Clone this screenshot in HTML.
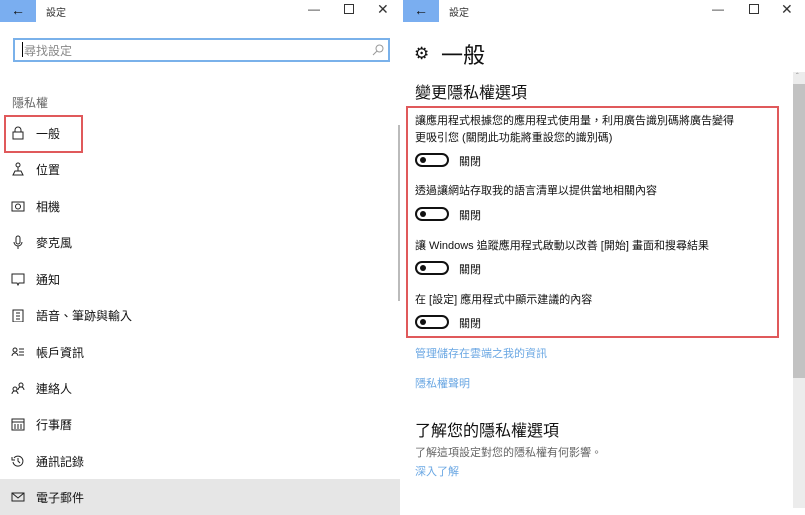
<!DOCTYPE html><html><head><meta charset="utf-8"><style>
*{margin:0;padding:0;box-sizing:border-box}
body{width:805px;height:508px;overflow:hidden;background:#fff;position:relative;font-family:"Liberation Sans","Noto Sans CJK TC",sans-serif;color:#111}
.a{position:absolute;white-space:nowrap}
.back{position:absolute;top:0;width:36px;height:22px;background:#7aaef0;color:#111;font-size:14px;text-align:center;line-height:20px}
.tb{font-size:10px;color:#333}
.item{position:absolute;left:0;width:400px;height:36px;font-size:12px}
.item span.t{position:absolute;left:36px;top:10px}
.item svg{position:absolute;left:11px;top:11px}
.tog{position:absolute;width:34px;height:14px;border:2px solid #111;border-radius:8px}
.tog:after{content:"";position:absolute;left:3px;top:2px;width:6px;height:6px;border-radius:50%;background:#111}
.lab{font-size:11px}
.lnk{color:#6aa7e3;font-size:11px}
</style></head><body>
<!-- left window -->
<div class="back" style="left:0">&#8592;</div>
<div class="a tb" style="left:46px;top:4px">設定</div>
<div class="a" style="left:308px;top:2px;font-size:12px;color:#333">&#8212;</div>
<div class="a" style="left:344px;top:4px;width:10px;height:10px;border:1px solid #333"></div>
<div class="a" style="left:377px;top:1px;font-size:14px;color:#333">&#10005;</div>
<div class="a" style="left:13px;top:38px;width:377px;height:24px;border:2px solid #7ab1ea"></div>
<div class="a" style="left:22px;top:42px;width:1px;height:15px;background:#000"></div>
<div class="a" style="left:24px;top:42px;font-size:12px;color:#888">尋找設定</div>
<svg class="a" style="left:372px;top:44px" width="12" height="12"><circle cx="7.5" cy="4.5" r="3.5" fill="none" stroke="#999"/><path d="M5 7L1 11" stroke="#999"/></svg>
<div class="a" style="left:12px;top:94px;font-size:12px;color:#666">隱私權</div>
<div class="a" style="left:398px;top:125px;width:2px;height:176px;background:#bbb"></div>
<div class="item" style="top:115px"><svg width="14" height="14"><rect x="2" y="6" width="10" height="7" fill="none" stroke="#222"/><path d="M4 6V4a3 3 0 0 1 6 0v2" fill="none" stroke="#222"/></svg><span class="t">一般</span></div>
<div class="a" style="left:4px;top:115px;width:79px;height:38px;border:2px solid #e0595b"></div>
<div class="item" style="top:151px"><svg width="14" height="14"><circle cx="7" cy="3" r="2" fill="none" stroke="#222"/><path d="M7 5v4M2 13l2-4h6l2 4z" fill="none" stroke="#222"/></svg><span class="t">位置</span></div>
<div class="item" style="top:188px"><svg width="14" height="14"><rect x="1" y="3" width="12" height="9" fill="none" stroke="#222"/><circle cx="7" cy="7.5" r="2.5" fill="none" stroke="#222"/></svg><span class="t">相機</span></div>
<div class="item" style="top:224px"><svg width="14" height="14"><rect x="5" y="1" width="4" height="8" rx="2" fill="none" stroke="#222"/><path d="M3 7a4 4 0 0 0 8 0M7 11v3" fill="none" stroke="#222"/></svg><span class="t">麥克風</span></div>
<div class="item" style="top:261px"><svg width="14" height="14"><path d="M1 2h12v9H8l-1 2-1-2H1z" fill="none" stroke="#222"/></svg><span class="t">通知</span></div>
<div class="item" style="top:297px"><svg width="14" height="14"><rect x="2" y="2" width="10" height="12" fill="none" stroke="#222"/><path d="M5 5h4M5 8h4M5 11h4" stroke="#222"/></svg><span class="t">語音、筆跡與輸入</span></div>
<div class="item" style="top:334px"><svg width="14" height="14"><circle cx="4" cy="5" r="2" fill="none" stroke="#222"/><path d="M1 11a3 3 0 0 1 6 0M8 4h5M8 7h5M8 10h5" fill="none" stroke="#222"/></svg><span class="t">帳戶資訊</span></div>
<div class="item" style="top:370px"><svg width="14" height="14"><circle cx="4" cy="8" r="2" fill="none" stroke="#222"/><circle cx="10" cy="4" r="2" fill="none" stroke="#222"/><path d="M1 13a3 3 0 0 1 6 0M7 9a3 3 0 0 1 6 0" fill="none" stroke="#222"/></svg><span class="t">連絡人</span></div>
<div class="item" style="top:406px"><svg width="14" height="14"><rect x="1" y="2" width="12" height="11" fill="none" stroke="#222"/><path d="M1 5h12M4 7v5M7 7v5M10 7v5" stroke="#222"/></svg><span class="t">行事曆</span></div>
<div class="item" style="top:443px"><svg width="14" height="14"><path d="M3 4a5 5 0 1 1-1 4" fill="none" stroke="#222"/><path d="M7 4v3l2 2M1 3v3h3" fill="none" stroke="#222"/></svg><span class="t">通訊記錄</span></div>
<div class="item" style="top:479px;background:#e6e6e6"><svg width="14" height="14"><rect x="1" y="3" width="12" height="8" fill="none" stroke="#222"/><path d="M1 3l6 5 6-5" fill="none" stroke="#222"/></svg><span class="t">電子郵件</span></div>
<!-- right window -->
<div class="back" style="left:403px">&#8592;</div>
<div class="a tb" style="left:449px;top:4px">設定</div>
<div class="a" style="left:712px;top:2px;font-size:12px;color:#333">&#8212;</div>
<div class="a" style="left:749px;top:4px;width:10px;height:10px;border:1px solid #333"></div>
<div class="a" style="left:781px;top:1px;font-size:14px;color:#333">&#10005;</div>
<div class="a" style="left:414px;top:44px;font-size:17px">&#9881;</div>
<div class="a" style="left:441px;top:38px;font-size:22px">一般</div>
<div class="a" style="left:415px;top:79px;font-size:16px">變更隱私權選項</div>
<div class="a" style="left:406px;top:106px;width:373px;height:232px;border:2px solid #e0595b"></div>
<div class="a lab" style="left:415px;top:113px;line-height:17px">讓應用程式根據您的應用程式使用量，利用廣告識別碼將廣告變得<br>更吸引您 (關閉此功能將重設您的識別碼)</div>
<div class="tog" style="left:415px;top:153px"></div><div class="a lab" style="left:459px;top:153px">關閉</div>
<div class="a lab" style="left:415px;top:182px">透過讓網站存取我的語言清單以提供當地相關內容</div>
<div class="tog" style="left:415px;top:207px"></div><div class="a lab" style="left:459px;top:207px">關閉</div>
<div class="a lab" style="left:415px;top:237px">讓 Windows 追蹤應用程式啟動以改善 [開始] 畫面和搜尋結果</div>
<div class="tog" style="left:415px;top:261px"></div><div class="a lab" style="left:459px;top:261px">關閉</div>
<div class="a lab" style="left:415px;top:291px">在 [設定] 應用程式中顯示建議的內容</div>
<div class="tog" style="left:415px;top:315px"></div><div class="a lab" style="left:459px;top:315px">關閉</div>
<div class="a lnk" style="left:415px;top:345px">管理儲存在雲端之我的資訊</div>
<div class="a lnk" style="left:415px;top:375px">隱私權聲明</div>
<div class="a" style="left:415px;top:417px;font-size:16px">了解您的隱私權選項</div>
<div class="a" style="left:415px;top:444px;font-size:11px;color:#666">了解這項設定對您的隱私權有何影響。</div>
<div class="a lnk" style="left:415px;top:463px">深入了解</div>
<div class="a" style="left:793px;top:72px;width:12px;height:436px;background:#ececec"></div>
<div class="a" style="left:793px;top:84px;width:12px;height:294px;background:#c2c2c2"></div>
<div class="a" style="left:796px;top:72px;font-size:8px;color:#888">&#710;</div>
</body></html>
